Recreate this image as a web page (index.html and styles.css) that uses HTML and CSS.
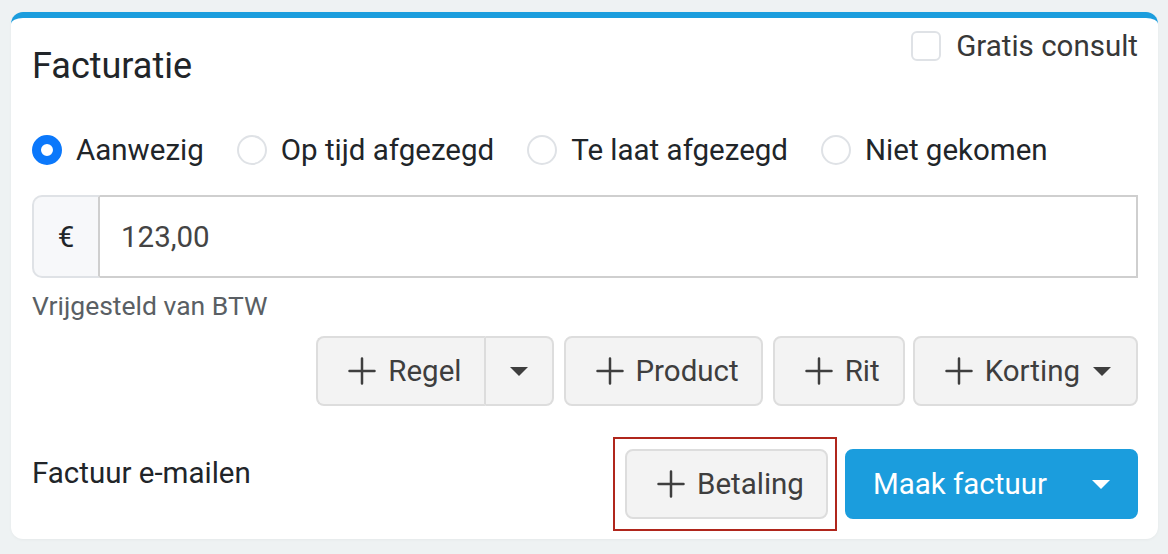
FILE: index.html
```html
<!DOCTYPE html>
<html lang="nl">
<head>
<meta charset="utf-8">
<title>Facturatie</title>
<link rel="stylesheet" href="styles.css">
</head>
<body>
<div class="page">
  <section class="card">
    <div class="card-head">
      <h2 class="title">Facturatie</h2>
      <label class="check">
        <span class="check-box"></span>
        <span class="check-label">Gratis consult</span>
      </label>
    </div>

    <div class="radios">
      <label class="radio"><span class="radio-dot checked"></span><span>Aanwezig</span></label>
      <label class="radio"><span class="radio-dot"></span><span>Op tijd afgezegd</span></label>
      <label class="radio"><span class="radio-dot"></span><span>Te laat afgezegd</span></label>
      <label class="radio"><span class="radio-dot"></span><span>Niet gekomen</span></label>
    </div>

    <div class="input-group">
      <span class="prefix">€</span>
      <span class="amount">123,00</span>
    </div>
    <div class="hint">Vrijgesteld van BTW</div>

    <div class="actions">
      <div class="split">
        <button class="btn btn-main"><svg class="plus" viewBox="0 0 28 28"><path d="M14 1.5V26.5M1.5 14H26.5"/></svg>Regel</button>
        <button class="btn btn-caret"><span class="caret"></span></button>
      </div>
      <button class="btn"><svg class="plus" viewBox="0 0 28 28"><path d="M14 1.5V26.5M1.5 14H26.5"/></svg>Product</button>
      <button class="btn btn-rit"><svg class="plus" viewBox="0 0 28 28"><path d="M14 1.5V26.5M1.5 14H26.5"/></svg>Rit</button>
      <button class="btn btn-drop"><svg class="plus" viewBox="0 0 28 28"><path d="M14 1.5V26.5M1.5 14H26.5"/></svg>Korting<span class="caret caret-after"></span></button>
    </div>

    <div class="footer">
      <span class="email">Factuur e-mailen</span>
      <div class="footer-btns">
        <span class="highlight">
          <button class="btn"><svg class="plus" viewBox="0 0 28 28"><path d="M14 1.5V26.5M1.5 14H26.5"/></svg>Betaling</button>
        </span>
        <button class="btn btn-primary">Maak factuur<span class="caret caret-white"></span></button>
      </div>
    </div>
  </section>
</div>
</body>
</html>
```

FILE: styles.css
```css
* { box-sizing: border-box; }
html, body { margin: 0; padding: 0; }
body {
  background: #eef2f3;
  font-family: Roboto, "Noto Sans", Arial, sans-serif;
  color: #212529;
  width: 1168px;
  height: 554px;
  overflow: hidden;
}
.page { padding: 12px 10px 0 11px; }
.card {
  background: #fff;
  border-top: 6px solid #1b9ddd;
  border-radius: 12px;
  padding: 13px 20px 20px 21px;
  box-shadow: 0 1px 3px rgba(0,0,0,0.04);
  height: 527px;
}
.card-head {
  display: flex;
  justify-content: space-between;
  align-items: flex-start;
}
.title {
  margin: 13px 0 0 0;
  font-size: 36px;
  font-weight: 400;
  line-height: 44px;
  color: #212529;
}
.check {
  display: flex;
  align-items: center;
  gap: 15px;
  font-size: 29.5px;
  color: #383838;
}
.check-box {
  width: 30px;
  height: 30px;
  border: 2px solid #dfe2e6;
  border-radius: 6px;
}
.check-label { line-height: 30px; }

.radios {
  display: flex;
  align-items: center;
  gap: 33px;
  margin-top: 45px;
  font-size: 29.5px;
  line-height: 34px;
}
.radio { display: flex; align-items: center; gap: 14px; }
.radio-dot {
  width: 30px; height: 30px;
  border-radius: 50%;
  border: 2px solid #dfe2e6;
  background: #fff;
}
.radio-dot.checked {
  border: 9px solid #0b78fb;
  background: #fff;
}

.input-group {
  display: flex;
  margin-top: 28px;
  height: 83px;
  font-size: 29.5px;
}
.prefix {
  width: 68px;
  display: flex; align-items: center; justify-content: center;
  background: #f7f8fa;
  border: 2px solid #dfe2e6;
  border-right: 2px solid #cfcfcf;
  border-radius: 10px 0 0 10px;
  color: #212529;
}
.amount {
  flex: 1;
  display: flex; align-items: center;
  padding-left: 21px;
  border: 2px solid #cfcfcf;
  border-left: none;
  color: #444;
}
.hint {
  margin-top: 12px;
  font-size: 26.5px;
  line-height: 32px;
  color: #5a5f64;
}

.actions {
  display: flex;
  justify-content: flex-end;
  gap: 10px;
  margin-top: 14px;
}
.btn {
  display: inline-flex;
  align-items: center;
  height: 70px;
  padding: 0 22px 0 30px;
  background: #f3f3f3;
  border: 2px solid #dddddd;
  border-radius: 8px;
  font-family: inherit;
  font-size: 29.5px;
  color: #3e3e3e;
}
.plus {
  width: 28px; height: 28px;
  margin-right: 12px;
  fill: none;
  stroke: #3e3e3e;
  stroke-width: 2.5;
  stroke-linecap: round;
}
.split { display: flex; }
.split .btn-main { border-radius: 8px 0 0 8px; border-right: 2px solid #dcdcdc; }
.split .btn-caret {
  border-radius: 0 8px 8px 0;
  border-left: none;
  padding: 0;
  width: 68px;
  justify-content: center;
}
.caret {
  display: inline-block;
  width: 0; height: 0;
  border-left: 9px solid transparent;
  border-right: 9px solid transparent;
  border-top: 9px solid #3e3e3e;
}
.btn-rit { padding-right: 23px; margin-right: -2px; }
.btn-drop { padding-right: 25px; }
.caret-after { margin-left: 13px; }
.caret-white { border-top-color: #fff; margin-left: 45px; }

.footer {
  display: flex;
  justify-content: space-between;
  align-items: center;
  margin-top: 43px;
}
.email { font-size: 29.5px; color: #212529; margin-top: -22px; }
.footer-btns { display: flex; gap: 17px; }
.highlight { position: relative; display: inline-flex; }
.highlight::after {
  content: "";
  position: absolute;
  left: -12px; top: -12px; right: -9px; bottom: -12px;
  border: 2px solid #b0261c;
  pointer-events: none;
}
.btn-primary {
  background: #1b9ddd;
  border-color: #1b9ddd;
  color: #fff;
  padding: 0 26px 0 26px;
}
```
